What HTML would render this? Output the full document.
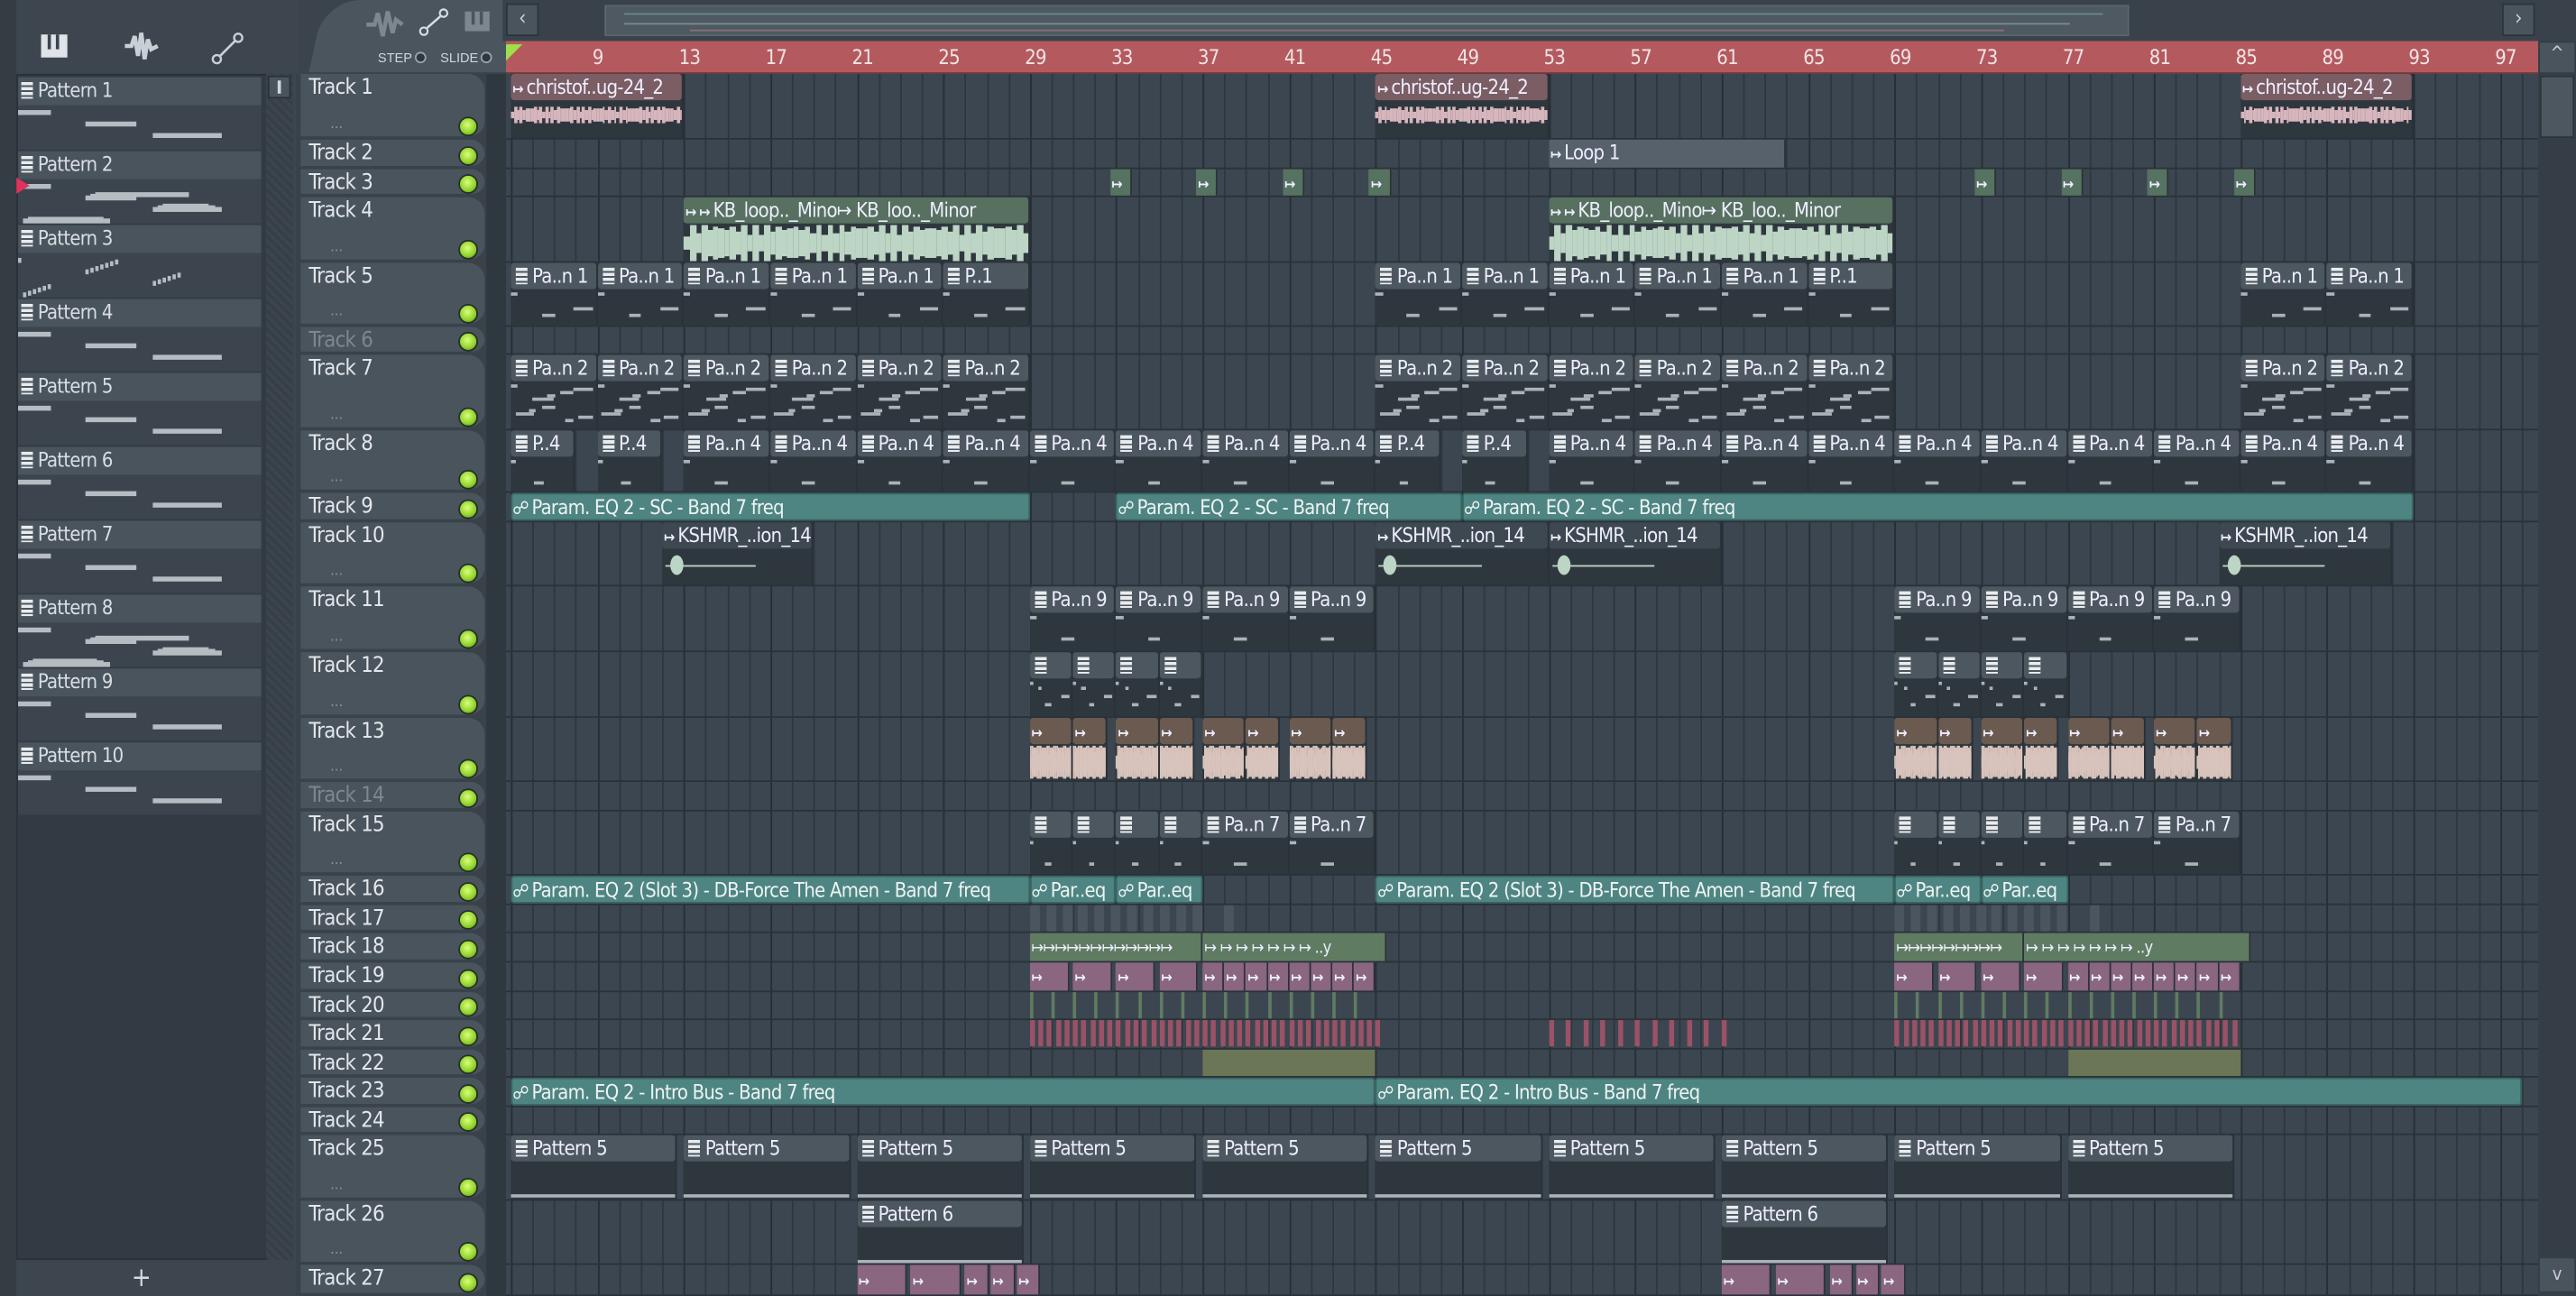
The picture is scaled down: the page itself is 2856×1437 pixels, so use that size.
<!DOCTYPE html>
<html><head><meta charset="utf-8">
<style>
html,body{margin:0;padding:0;background:#3a434c;overflow:hidden;width:2856px;height:1436px}
#w{position:absolute;left:0;top:0;width:1568px;height:789px;transform:scale(1.82143);transform-origin:0 0;font-family:"Liberation Sans Narrow","DejaVu Sans Condensed","Liberation Sans",sans-serif;color:#d9dee2;overflow:hidden;background:#3b444d}
.a{position:absolute;box-sizing:border-box}
.t{white-space:nowrap;overflow:hidden;font-size:12px;line-height:16px;letter-spacing:-0.4px}
.led{position:absolute;width:10px;height:10px;border-radius:50%;background:radial-gradient(circle at 45% 40%,#d8ff7a,#8fd12a 60%,#4b7a12);border:1px solid #27302a}
.pi{display:inline-block;width:7px;height:10px;background:#e8ecee;margin:0 3px 0 2px;vertical-align:-1px;background-image:repeating-linear-gradient(#e8ecee 0 2px,#4b555e 2px 3px)}
</style></head><body>
<div id="w">
<div class="a" style="left:0;top:0;width:182px;height:789px;background:#3d464f"></div>
<div class="a" style="left:0;top:0;width:10px;height:789px;background:#343c44"></div>
<div class="a" style="left:10px;top:45px;width:168px;height:722px;background:#323b43;border:1px solid #2a3138"></div>
<div class="a" style="left:162px;top:45px;width:16px;height:722px;background:repeating-linear-gradient(45deg,#363f47 0 2px,#3c454e 2px 4px)"></div>
<div class="a" style="left:163px;top:46px;width:14px;height:14px;background:#4a545d;border:1px solid #2a3138"></div>
<div class="a" style="left:169px;top:49px;width:2px;height:8px;background:#cfd5da"></div>
<div class="a t" style="left:80px;top:770px;font-size:16px;color:#d6dbdf">+</div>
<svg class="a" style="left:20px;top:18px" width="160" height="24" viewBox="0 0 160 24">
<rect x="5" y="3" width="16" height="14" fill="#dfe4e8"/><rect x="9" y="3" width="2" height="9" fill="#3d464f"/><rect x="14" y="3" width="2" height="9" fill="#3d464f"/>
<path d="M56 10 L60 10 L62 4 L64 16 L66 2 L68 18 L70 6 L72 12 L76 10" stroke="#c9d0d5" stroke-width="2.5" fill="none"/>
<circle cx="112" cy="18" r="2.5" stroke="#c9d0d5" fill="none" stroke-width="1.3"/><circle cx="125" cy="5" r="2.5" stroke="#c9d0d5" fill="none" stroke-width="1.3"/><path d="M114 16 L123 7" stroke="#c9d0d5" stroke-width="1.5"/>
</svg>
<div class="a" style="top:0;width:130px;height:44px;background:#4b555e;border-radius:22px 8px 0 0;transform:skewX(-12deg);transform-origin:bottom left;left:188px"></div>
<svg class="a" style="left:220px;top:4px" width="90" height="40">
<path d="M3 11 L8 11 L10 4 L13 18 L16 3 L19 16 L21 8 L25 11" stroke="#7d878f" stroke-width="2.5" fill="none"/>
<circle cx="38" cy="15" r="2.3" stroke="#d8dde1" fill="none" stroke-width="1.2"/><circle cx="50" cy="4" r="2.3" stroke="#d8dde1" fill="none" stroke-width="1.2"/><path d="M40 13 L48 6" stroke="#d8dde1" stroke-width="1.4"/>
<rect x="63" y="3" width="15" height="12" fill="#7d878f"/><rect x="67" y="3" width="2" height="8" fill="#4b555e"/><rect x="72" y="3" width="2" height="8" fill="#4b555e"/>
<text x="10" y="34" font-size="8" fill="#cfd5da" font-family="Liberation Sans Narrow,Liberation Sans,sans-serif">STEP</text><circle cx="36" cy="31" r="3" fill="#2f373e" stroke="#9aa3aa"/>
<text x="48" y="34" font-size="8" fill="#cfd5da" font-family="Liberation Sans Narrow,Liberation Sans,sans-serif">SLIDE</text><circle cx="76" cy="31" r="3" fill="#2f373e" stroke="#9aa3aa"/>
</svg>
<div class="a" style="left:306px;top:0;width:1262px;height:25px;background:#39424a"></div>
<div class="a" style="left:308px;top:2px;width:20px;height:20px;background:#4a545d;border:1px solid #2c343b;color:#ccd;font-size:13px;text-align:center;line-height:18px">‹</div>
<div class="a" style="left:1523px;top:2px;width:20px;height:20px;background:#4a545d;border:1px solid #2c343b;color:#ccd;font-size:13px;text-align:center;line-height:18px">›</div>
<div class="a" style="left:368px;top:3px;width:928px;height:19px;background:#4e5961;border:1px solid #5a656e"></div>
<div class="a" style="left:380px;top:8px;width:900px;height:1px;background:#6a8a8c"></div>
<div class="a" style="left:380px;top:14px;width:880px;height:1px;background:#7b8a8e"></div>
<div class="a" style="left:420px;top:18px;width:800px;height:1px;background:#8a6f78"></div>
<div class="a" style="left:308px;top:25px;width:1237px;height:20px;background:#b45a5f;border-bottom:1px solid #6e3a3d"></div>
<div class="a" style="left:308px;top:27px;width:0;height:0;border-left:10px solid #9fe04a;border-bottom:10px solid transparent"></div>
<div class="a" style="left:1545px;top:25px;width:23px;height:764px;background:#353e46"></div>
<div class="a" style="left:1546px;top:26px;width:21px;height:18px;background:#4a545d;color:#ccd;font-size:11px;text-align:center">^</div>
<div class="a" style="left:1546px;top:46px;width:21px;height:38px;background:#4d5760;border:1px solid #2c343b"></div>
<div class="a" style="left:1546px;top:766px;width:21px;height:20px;background:#4a545d;color:#ccd;font-size:11px;text-align:center;line-height:20px">v</div>
<div class="a" style="left:180px;top:45px;width:128px;height:744px;background:#394249"></div>
<div class="a" style="left:296px;top:45px;width:12px;height:744px;background:#2f383f"></div>
<div id="grid" class="a" style="left:308px;top:45px;width:1237px;height:744px;overflow:hidden;background:#3c4650"></div>
<div id="ly" class="a" style="left:0;top:0;width:1568px;height:789px"></div>
</div>
<script>
var L=document.getElementById('ly'),G=document.getElementById('grid');
function X(b){return 311+(b-5)*13.16;}
function d(p,s,h){var e=document.createElement('div');e.className='a';e.style.cssText=s;if(h!=null)e.innerHTML=h;p.appendChild(e);return e;}
for(var b=9;b<=97;b+=4)d(L,'left:'+(X(b)-3)+'px;top:27px;font-size:12px;color:#f1e3e3;width:20px','<span class="t">'+b+'</span>');
var rows=[[45,40],[85,18],[103,17],[120,40],[160,39],[199,17],[216,46],[262,38],[300,18],[318,39],[357,40],[397,40],[437,39],[476,18],[494,39],[533,18],[551,17],[568,18],[586,18],[604,17],[621,18],[639,17],[656,18],[674,17],[691,40],[731,39],[770,19]];
for(var b=5;b<100;b++){d(G,'left:'+(X(b)-308)+'px;top:0;width:1px;height:744px;background:'+(b%4==1?'#262e35':'#2e373f'));}
rows.forEach(function(r,i){
 d(G,'left:0;top:'+(r[0]+r[1]-45-1)+'px;width:1237px;height:1px;background:#2a3239');
 var h=d(L,'left:183px;top:'+r[0]+'px;width:112px;height:'+(r[1]-1)+'px;background:#4a545d;border-radius:0 10px 10px 0;border-bottom:1px solid #3a434b');
 d(h,'left:5px;top:1px;font-size:13px;color:'+(i==5||i==13?'#7e878e':'#e3e7ea'),'<span class="t" style="font-size:13px">Track '+(i+1)+'</span>');
 d(h,'left:96px;top:'+(r[1]-14)+'px','').className='led';
 if(r[1]>30)d(h,'left:18px;top:'+(r[1]-14)+'px;font-size:9px;color:#8a939a','...');
});
function R(n){return rows[n-1];}
function clip(t,b1,b2,hc,bc,label,icon,opt){var r=R(t),x=X(b1),w=X(b2)-x,hh=r[1]>30?16:r[1]-1;
 var c=d(L,'left:'+x+'px;top:'+r[0]+'px;width:'+w+'px;height:'+(r[1]-1)+'px;background:'+bc+';overflow:hidden;border-right:1px solid #2a3138');
 d(c,'left:0;top:0;width:100%;height:'+hh+'px;background:'+hc+';border-radius:2px','<span class="t" style="display:block;font-size:12px;line-height:'+hh+'px;padding-left:1px;color:#eef">'+icon+(label||'')+'</span>');
 return c;}
var PI='<span class="pi"></span>',AU='<b style="font-size:9px;margin-right:2px">&#x21A6;</b>',AT='<span style="font-size:11px;margin-right:2px">&#x260D;</span>';
function wave(c,col,top,h){var s='';for(var i=0;i<60;i++){var a=(0.4+0.6*Math.abs(Math.sin(i*1.7)))*h/2;s+='<div style="position:absolute;left:'+(i/60*100)+'%;top:'+(top+h/2-a)+'px;width:1.8%;height:'+(2*a)+'px;background:'+col+'"></div>';}c.insertAdjacentHTML('beforeend',s);}
function bars(c,top,h,n){var s='';for(var i=0;i<n;i++){s+='<div style="position:absolute;left:'+((i*37)%90)+'%;top:'+(top+(i*13)%h)+'px;width:'+(8+(i*7)%20)+'%;height:2px;background:#aab3b9"></div>';}c.insertAdjacentHTML('beforeend',s);}
[[5,13],[45,53],[85,93]].forEach(function(p){var c=clip(1,p[0],p[1],'#7b5d64','#2f373e','christof..ug-24_2',AU);wave(c,'#d7b6bd',20,10);});
clip(2,53,64,'#56616b','#56616b','Loop 1',AU);
[33,37,41,45,73,77,81,85].forEach(function(b){clip(3,b-0.3,b+0.7,'#557360','#557360','',AU);});
[[13,29],[53,69]].forEach(function(p){var c=clip(4,p[0],p[1],'#577060','#2f373e','KB_loop.._Mino'+'&#x21A6; KB_loo.._Minor',AU+AU);wave(c,'#bcd5c5',17,22);});
function pats(t,list,lab,body){list.forEach(function(p){var c=clip(t,p[0],p[1],'#4d5760','#2e363e',p[2]||lab,PI);bars(c,18,R(t)[1]-22,body);});}
function seq(a,b,s){var o=[];for(var x=a;x<b;x+=s)o.push([x,Math.min(x+s,b)]);return o;}
pats(5,seq(5,25,4).concat([[25,29,'P..1']]).concat(seq(45,65,4)).concat([[65,69,'P..1'],[85,89],[89,93]]),'Pa..n 1',3);
pats(7,seq(5,29,4).concat(seq(45,69,4)).concat([[85,89],[89,93]]),'Pa..n 2',10);
pats(8,[[5,8,'P..4'],[9,12,'P..4']].concat(seq(13,45,4)).concat([[45,48,'P..4'],[49,52,'P..4']]).concat(seq(53,93,4)),'Pa..n 4',2);
function auto(t,b1,b2,lab){var r=R(t);d(L,'left:'+X(b1)+'px;top:'+r[0]+'px;width:'+(X(b2)-X(b1))+'px;height:'+(r[1]-1)+'px;background:#4e8582;border:1px solid #3a6664;border-radius:2px','<span class="t" style="display:block;font-size:12px;line-height:'+(r[1]-2)+'px;color:#eef3f3">'+AT+lab+'</span>');}
auto(9,5,29,'Param. EQ 2 - SC - Band 7 freq');auto(9,33,49,'Param. EQ 2 - SC - Band 7 freq');auto(9,49,93,'Param. EQ 2 - SC - Band 7 freq');
[[12,19],[45,53],[53,61],[84,92]].forEach(function(p){var c=clip(10,p[0],p[1],'#3e4850','#2f373e','KSHMR_..ion_14',AU);d(c,'left:2px;top:26px;width:60%;height:1px;background:#bcd5c5');d(c,'left:5px;top:20px;width:8px;height:12px;background:#bcd5c5;border-radius:50%');});
pats(11,seq(29,45,4).concat(seq(69,85,4)),'Pa..n 9',2);
pats(12,[[29,31,' '],[31,33,' '],[33,35,' '],[35,37,' '],[69,71,' '],[71,73,' '],[73,75,' '],[75,77,' ']],'',4);
[29,31,33,35,37,39,41,43,69,71,73,75,77,79,81,83].forEach(function(b){var c=clip(13,b,b+(b%4==1?2:1.6),'#6b5a50','#2f373e','',AU);wave(c,'#d8c4bc',17,20);});
pats(15,[[29,31,' '],[31,33,' '],[33,35,' '],[35,37,' '],[37,41,'Pa..n 7'],[41,45,'Pa..n 7'],[69,71,' '],[71,73,' '],[73,75,' '],[75,77,' '],[77,81,'Pa..n 7'],[81,85,'Pa..n 7']],'',2);
auto(16,5,29,'Param. EQ 2 (Slot 3) - DB-Force The Amen - Band 7 freq');auto(16,29,33,'Par..eq');auto(16,33,37,'Par..eq');
auto(16,45,69,'Param. EQ 2 (Slot 3) - DB-Force The Amen - Band 7 freq');auto(16,69,73,'Par..eq');auto(16,73,77,'Par..eq');
for(var b=29;b<44;b+=0.75){if(b>37&&(b*4)%8)continue;d(L,'left:'+X(b)+'px;top:'+R(17)[0]+'px;width:6px;height:16px;background:#4b5560;border-radius:1px');}
for(var b=69;b<84;b+=0.75){if(b>77&&(b*4)%8)continue;d(L,'left:'+X(b)+'px;top:'+R(17)[0]+'px;width:6px;height:16px;background:#4b5560;border-radius:1px');}
[[29,37,'&#x21A6;&#x21A6;&#x21A6;&#x21A6;&#x21A6;&#x21A6;&#x21A6;&#x21A6;&#x21A6;&#x21A6;&#x21A6;&#x21A6;'],[37,45.5,'&#x21A6; &#x21A6; &#x21A6; &#x21A6; &#x21A6; &#x21A6; &#x21A6; ..y'],[69,75,'&#x21A6;&#x21A6;&#x21A6;&#x21A6;&#x21A6;&#x21A6;&#x21A6;&#x21A6;&#x21A6;'],[75,85.5,'&#x21A6; &#x21A6; &#x21A6; &#x21A6; &#x21A6; &#x21A6; &#x21A6; ..y']].forEach(function(p){clip(18,p[0],p[1],'#5f7c62','#5f7c62','<span style="font-size:10px">'+p[2]+'</span>','');});
[29,31,33,35,37,38,39,40,41,42,43,44,69,71,73,75,77,78,79,80,81,82,83,84].forEach(function(b){clip(19,b,b+(b<37||(b>60&&b<77)?1.8:1),'#8a6680','#8a6680','',AU);});
for(var b=29;b<45;b+=1)d(L,'left:'+X(b)+'px;top:'+R(20)[0]+'px;width:2px;height:16px;background:#5f7c62');
for(var b=69;b<85;b+=1)d(L,'left:'+X(b)+'px;top:'+R(20)[0]+'px;width:2px;height:16px;background:#5f7c62');
[[29,45],[53,61],[69,85]].forEach(function(p){for(var b=p[0];b<p[1];b+=(p[0]==53?0.8:0.4))d(L,'left:'+X(b)+'px;top:'+R(21)[0]+'px;width:3px;height:16px;background:#9a5266');});
[[37,45],[77,85]].forEach(function(p){d(L,'left:'+X(p[0])+'px;top:'+R(22)[0]+'px;width:'+(X(p[1])-X(p[0]))+'px;height:16px;background:#6a7656');});
auto(23,5,45,'Param. EQ 2 - Intro Bus - Band 7 freq');auto(23,45,98,'Param. EQ 2 - Intro Bus - Band 7 freq');
[[5,13],[13,21],[21,29],[29,37],[37,45],[45,53],[53,61],[61,69],[69,77],[77,85]].forEach(function(p){var c=clip(25,p[0],p[1]-0.3,'#4d5760','#2e363e','Pattern 5',PI);d(c,'left:0;top:36px;width:100%;height:2px;background:#aab3b9');});
[[21,29],[61,69]].forEach(function(p){var c=clip(26,p[0],p[1]-0.3,'#4d5760','#2e363e','Pattern 6',PI);d(c,'left:0;top:36px;width:100%;height:2px;background:#aab3b9');
 [0,2.5,5,6.2,7.4].forEach(function(o){clip(27,p[0]+o,p[0]+o+(o<5?2.3:1.1),'#8a6680','#8a6680','',AU);});});
for(var i=0;i<10;i++){var y=47+i*45;var p=d(L,'left:11px;top:'+y+'px;width:148px;height:44px;background:#3c454e');
 d(p,'left:0;top:0;width:148px;height:17px;background:#4a545d','<span class="t" style="display:block;line-height:17px;font-size:12px">'+PI+'Pattern '+(i+1)+'</span>');
 var s='';for(var k=0;k<(i==1?9:i==2?20:i==7?10:3);k++){s+='<div style="position:absolute;left:'+((k*41)%120)+'px;top:'+(20+(k*7)%22)+'px;width:'+(i==2?2:(20+(k*11)%40))+'px;height:3px;background:#b5bcc2"></div>';}p.insertAdjacentHTML('beforeend',s);}
d(L,'left:10px;top:108px;width:0;height:0;border-left:8px solid #e0325a;border-top:5px solid transparent;border-bottom:5px solid transparent');
</script>
</body></html>
